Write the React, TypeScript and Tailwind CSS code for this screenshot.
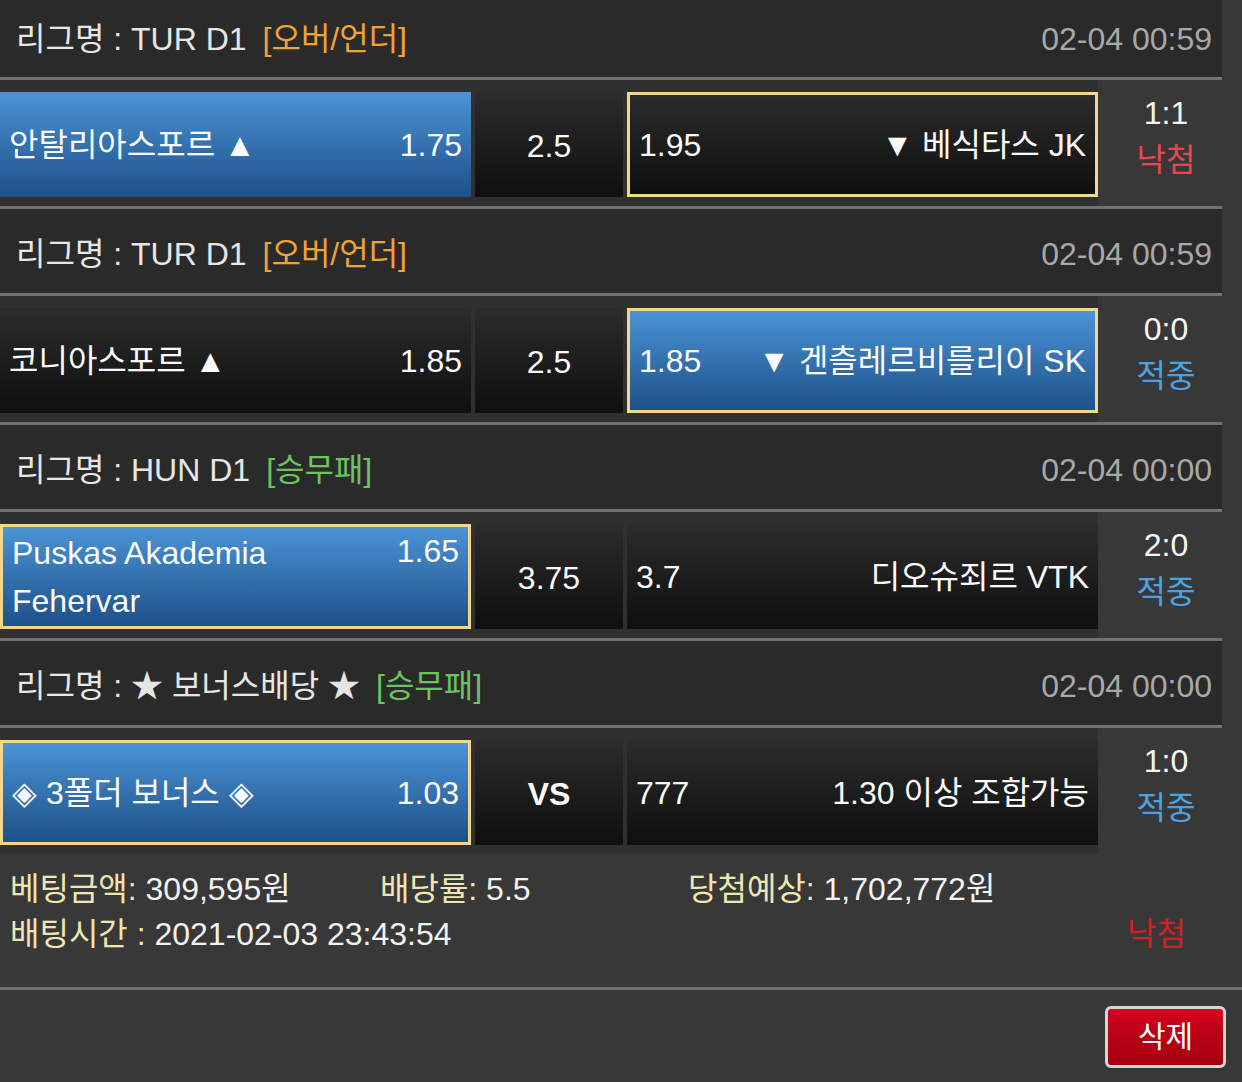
type Side = {
  name: string[];
  odds: string;
  blue: boolean;
  picked: boolean;
};

type Bet = {
  league: string;
  kind: string;
  kindClass: string;
  date: string;
  home: Side;
  mid: string;
  away: Side;
  score: string;
  result: string;
  won: boolean;
};

const bets: Bet[] = [
  {
    league: "리그명 : TUR D1",
    kind: "[오버/언더]",
    kindClass: "text-[#f0a238]",
    date: "02-04 00:59",
    home: { name: ["안탈리아스포르 ▲"], odds: "1.75", blue: true, picked: false },
    mid: "2.5",
    away: { name: ["▼ 베식타스 JK"], odds: "1.95", blue: false, picked: true },
    score: "1:1",
    result: "낙첨",
    won: false,
  },
  {
    league: "리그명 : TUR D1",
    kind: "[오버/언더]",
    kindClass: "text-[#f0a238]",
    date: "02-04 00:59",
    home: { name: ["코니아스포르 ▲"], odds: "1.85", blue: false, picked: false },
    mid: "2.5",
    away: { name: ["▼ 겐츨레르비를리이 SK"], odds: "1.85", blue: true, picked: true },
    score: "0:0",
    result: "적중",
    won: true,
  },
  {
    league: "리그명 : HUN D1",
    kind: "[승무패]",
    kindClass: "text-[#6cc45e]",
    date: "02-04 00:00",
    home: { name: ["Puskas Akademia", "Fehervar"], odds: "1.65", blue: true, picked: true },
    mid: "3.75",
    away: { name: ["디오슈죄르 VTK"], odds: "3.7", blue: false, picked: false },
    score: "2:0",
    result: "적중",
    won: true,
  },
  {
    league: "리그명 : ★ 보너스배당 ★",
    kind: "[승무패]",
    kindClass: "text-[#6cc45e]",
    date: "02-04 00:00",
    home: { name: ["◈ 3폴더 보너스 ◈"], odds: "1.03", blue: true, picked: true },
    mid: "VS",
    away: { name: ["1.30 이상 조합가능"], odds: "777", blue: false, picked: false },
    score: "1:0",
    result: "적중",
    won: true,
  },
];

const Line = ({ full }: { full?: boolean }) => (
  <div className={full ? "h-[3px] w-full bg-[#6f6f6f]" : "h-[3px] w-[1222px] bg-[#727272]"} />
);

const boxClass = (s: Side) =>
  [
    "h-[105px] w-[471px] flex items-center justify-between px-[9px]",
    s.blue
      ? "bg-gradient-to-b from-[#4c94d6] to-[#1d5189]"
      : "bg-gradient-to-b from-[#2c2c2c] to-[#0f0f0f]",
    s.picked ? "border-[3px] border-[#f4d68c]" : "",
  ].join(" ");

const Name = ({ s }: { s: Side }) => (
  <div className="leading-[48px]">
    {s.name.map((n) => (
      <div key={n}>{n}</div>
    ))}
  </div>
);

const BetBlock = ({ bet, first, last }: { bet: Bet; first: boolean; last: boolean }) => (
  <div>
    <div
      className={
        "w-[1222px] bg-[#2a2a2a] flex items-center justify-between pl-4 pr-[10px] " +
        (first ? "h-[77px]" : "h-[84px] pt-[6px]")
      }
    >
      <div className="text-[#e6e6e6]">
        {bet.league}
        <span className={"ml-4 " + bet.kindClass}>{bet.kind}</span>
      </div>
      <div className="text-[#a8a8a8]">{bet.date}</div>
    </div>
    <Line />
    <div className="flex">
      <div className="w-[1098px] bg-[#303030] flex gap-1 pt-3 pb-[9px] text-[#fafafa]">
        <div className={boxClass(bet.home)}>
          <Name s={bet.home} />
          <div className={bet.home.name.length > 1 ? "self-start leading-[48px]" : ""}>
            {bet.home.odds}
          </div>
        </div>
        <div className="h-[105px] w-[148px] flex items-center justify-center pt-[3px] bg-gradient-to-b from-[#2c2c2c] to-[#0f0f0f]">
          <span className={bet.mid === "VS" ? "font-bold" : ""}>{bet.mid}</span>
        </div>
        <div className={boxClass(bet.away)}>
          <div>{bet.away.odds}</div>
          <Name s={bet.away} />
        </div>
      </div>
      <div className="flex-1 pr-2 pb-3 flex flex-col items-center justify-center leading-[47px]">
        <div className="text-[#f5f5f5]">{bet.score}</div>
        <div className={bet.won ? "text-[#4ea2e2]" : "text-[#e5484f]"}>{bet.result}</div>
      </div>
    </div>
    {!last && <Line />}
  </div>
);

export default function App() {
  return (
    <div className="w-[1242px] h-[1082px] overflow-hidden bg-[#383838] font-['Liberation_Sans','Noto_Sans_CJK_KR',sans-serif] text-[32px]">
      {bets.map((b, i) => (
        <BetBlock key={i} bet={b} first={i === 0} last={i === bets.length - 1} />
      ))}

      <div className="pl-[10px] pr-14 pt-[13px] pb-[24px] leading-[45px]">
        <div className="flex">
          <div className="w-[370px]">
            <span className="text-[#efe6b4]">베팅금액: </span>
            <span className="text-[#f2f2f2]">309,595원</span>
          </div>
          <div className="w-[308px]">
            <span className="text-[#efe6b4]">배당률: </span>
            <span className="text-[#f2f2f2]">5.5</span>
          </div>
          <div>
            <span className="text-[#efe6b4]">당첨예상: </span>
            <span className="text-[#f2f2f2]">1,702,772원</span>
          </div>
        </div>
        <div className="flex justify-between">
          <div>
            <span className="text-[#efe6b4]">배팅시간 : </span>
            <span className="text-[#f2f2f2]">2021-02-03 23:43:54</span>
          </div>
          <div className="text-[#d91e22]">낙첨</div>
        </div>
      </div>

      <div className="mt-[6px]">
        <Line full />
      </div>

      <div className="flex justify-end pr-4 pt-4">
        <button className="w-[121px] h-[62px] rounded-md border-[3px] border-[#d6d6d6] bg-gradient-to-b from-[#d2041e] to-[#a3000f] text-white text-[30px] leading-none">
          삭제
        </button>
      </div>
    </div>
  );
}
